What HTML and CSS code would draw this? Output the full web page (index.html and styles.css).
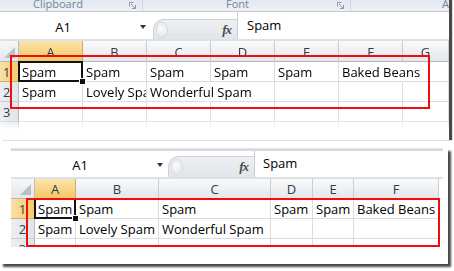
FILE: index.html
```html
<!DOCTYPE html>
<html lang="en">
<head>
  <meta charset="UTF-8">
  <title>Excel overflow text</title>
  <link rel="stylesheet" href="styles.css">
</head>
<body>

  <div class="shot shot-top">
    <div class="ribbon-groups">
      <div class="group g-clip">
        <span>Clipboard</span>
        <svg class="launcher" width="7" height="7" viewBox="0 0 7 7"><path d="M0.5 4.5v-4h4M2 2l4 4M6.5 3v3.5h-3.5" fill="none" stroke="#8d99a9" stroke-width="1"/></svg>
      </div>
      <div class="group g-font">
        <span>Font</span>
        <svg class="launcher" width="7" height="7" viewBox="0 0 7 7"><path d="M0.5 4.5v-4h4M2 2l4 4M6.5 3v3.5h-3.5" fill="none" stroke="#8d99a9" stroke-width="1"/></svg>
      </div>
      <div class="group g-align"><span>A</span></div>
    </div>

    <div class="formula-row">
      <div class="name-box"><span class="ref">A1</span><i class="dd"></i></div>
      <div class="grip"><i class="knob"></i><span class="fx">fx</span></div>
      <div class="formula-input">Spam</div>
    </div>

    <div class="sheet sheet-top">
      <div class="corner"><i></i></div>
      <div class="col-hd sel">A</div>
      <div class="col-hd">B</div>
      <div class="col-hd">C</div>
      <div class="col-hd">D</div>
      <div class="col-hd">E</div>
      <div class="col-hd">F</div>
      <div class="col-hd">G</div>

      <div class="row-hd sel">1</div>
      <div class="cell active">Spam</div>
      <div class="cell">Spam</div>
      <div class="cell">Spam</div>
      <div class="cell">Spam</div>
      <div class="cell">Spam</div>
      <div class="cell spill">Baked Beans</div>
      <div class="cell"></div>

      <div class="row-hd">2</div>
      <div class="cell">Spam</div>
      <div class="cell">Lovely Spam</div>
      <div class="cell spill">Wonderful Spam</div>
      <div class="cell"></div>
      <div class="cell"></div>
      <div class="cell"></div>
      <div class="cell"></div>

      <div class="row-hd">3</div>
      <div class="cell"></div>
      <div class="cell"></div>
      <div class="cell"></div>
      <div class="cell"></div>
      <div class="cell"></div>
      <div class="cell"></div>
      <div class="cell"></div>

      <div class="row-hd"></div>
      <div class="cell"></div>
      <div class="cell"></div>
      <div class="cell"></div>
      <div class="cell"></div>
      <div class="cell"></div>
      <div class="cell"></div>
      <div class="cell"></div>
    </div>

    <div class="mark mark-top"></div>
  </div>

  <div class="shot shot-bottom">
    <div class="top-line"></div>
    <div class="formula-row">
      <div class="name-box"><span class="ref">A1</span><i class="dd"></i></div>
      <div class="grip"><i class="knob"></i><span class="fx">fx</span></div>
      <div class="formula-input">Spam</div>
    </div>

    <div class="sheet sheet-bottom">
      <div class="corner"><i></i></div>
      <div class="col-hd sel">A</div>
      <div class="col-hd">B</div>
      <div class="col-hd">C</div>
      <div class="col-hd">D</div>
      <div class="col-hd">E</div>
      <div class="col-hd">F</div>

      <div class="row-hd sel">1</div>
      <div class="cell active">Spam</div>
      <div class="cell">Spam</div>
      <div class="cell">Spam</div>
      <div class="cell">Spam</div>
      <div class="cell">Spam</div>
      <div class="cell">Baked Beans</div>

      <div class="row-hd">2</div>
      <div class="cell">Spam</div>
      <div class="cell">Lovely Spam</div>
      <div class="cell">Wonderful Spam</div>
      <div class="cell"></div>
      <div class="cell"></div>
      <div class="cell"></div>

      <div class="row-hd">3</div>
      <div class="cell"></div>
      <div class="cell"></div>
      <div class="cell"></div>
      <div class="cell"></div>
      <div class="cell"></div>
      <div class="cell"></div>
    </div>

    <div class="mark mark-bottom"></div>
  </div>

</body>
</html>
```

FILE: styles.css
```css
body {
  margin: 0;
  width: 454px;
  height: 271px;
  overflow: hidden;
  background-color: #ffffff;
  font-family: "Open Sans", "Noto Sans", sans-serif;
  font-size: 13px;
  color: #000000;
}

.shot {
  position: relative;
  background-color: #ffffff;
  box-sizing: border-box;
}

.shot-top {
  width: 449px;
  height: 140px;
  box-shadow: 3px 0 1px rgba(40, 40, 40, 0.85);
}

.shot-bottom {
  width: 448px;
  height: 116px;
  margin-top: 8px;
  padding-left: 11px;
  padding-right: 8px;
  box-shadow: 3px 3px 2px rgba(40, 40, 40, 0.85);
}

/* ribbon group captions */
.ribbon-groups {
  display: flex;
  height: 11px;
  border-bottom: 1px solid #c3cad4;
  background: linear-gradient(#e4e9ef, #edf0f4);
  font-size: 11px;
  line-height: 11px;
  color: #7284a0;
}

.group {
  display: flex;
  align-items: flex-start;
  box-sizing: border-box;
  border-right: 1px solid #cfd6df;
}

.group span {
  margin-top: -2px;
}

.g-clip {
  width: 144px;
  padding-left: 33px;
}

.g-font {
  width: 209px;
  padding-left: 83px;
}

.g-align {
  flex: 1;
  padding-left: 91px;
  border-right: none;
}

.launcher {
  margin-left: auto;
  margin-right: 6px;
  margin-top: 2px;
}

/* name box + formula bar */
.formula-row {
  display: flex;
  height: 27px;
  border-bottom: 2px solid #dde1e6;
  background-color: #ffffff;
}

.shot-bottom .formula-row {
  height: 26px;
  margin-right: -3px;
}

.top-line {
  height: 3px;
  margin-right: -3px;
  background: linear-gradient(#e2e5e9, #cfd4da);
}

.name-box {
  display: flex;
  align-items: center;
  width: 150px;
  padding-top: 3px;
  box-sizing: border-box;
}

.shot-bottom .name-box {
  width: 154px;
  padding-top: 2px;
}

.ref {
  width: 126px;
  text-align: center;
  font-size: 13px;
}

.shot-bottom .ref {
  width: 138px;
}

.dd {
  width: 0;
  height: 0;
  margin-left: 14px;
  border-left: 3.5px solid transparent;
  border-right: 3.5px solid transparent;
  border-top: 4px solid #333333;
}

.shot-bottom .dd {
  margin-left: 8px;
}

.grip {
  display: flex;
  align-items: center;
  align-self: flex-end;
  width: 84px;
  height: 20px;
  margin-left: 3px;
  box-sizing: border-box;
  border: 1px solid #cdd2d8;
  border-right: none;
  border-bottom: none;
  border-radius: 11px 0 0 0;
  background: linear-gradient(#eef0f2, #e2e5e9);
}

.shot-bottom .grip {
  height: 21px;
  width: 86px;
}

.knob {
  width: 10px;
  height: 14px;
  margin-left: 3px;
  border-radius: 50%;
  background: radial-gradient(circle at 40% 40%, #fbfbfc, #dfe2e6);
  box-shadow: 0 0 0 1px #d5d9de;
}

.fx {
  margin-left: auto;
  margin-right: 6px;
  font-family: "Liberation Serif", "DejaVu Serif", serif;
  font-style: italic;
  font-weight: bold;
  font-size: 13px;
  letter-spacing: -1px;
  color: #4a4a4a;
}

.formula-input {
  flex: 1;
  padding-left: 9px;
  padding-top: 4px;
  border-left: 1px solid #c9ced5;
  font-size: 13px;
  line-height: 19px;
}

.shot-bottom .formula-input {
  padding-left: 8px;
  padding-top: 3px;
}

/* sheet grid */
.sheet {
  display: grid;
  overflow: hidden;
}

.sheet-top {
  grid-template-columns: 19px repeat(6, 64px) 46px;
  grid-template-rows: 21px repeat(4, 20px);
  height: 89px;
  -webkit-mask-image: linear-gradient(#000 78px, transparent 89px);
  mask-image: linear-gradient(#000 78px, transparent 89px);
}

.sheet-bottom {
  grid-template-columns: 24px 41px 83px 112px 42px 41px 85px;
  grid-template-rows: repeat(4, 20px);
  height: 68px;
}

.corner,
.col-hd,
.row-hd,
.cell {
  box-sizing: border-box;
}

.corner {
  display: flex;
  align-items: flex-end;
  justify-content: flex-end;
  padding: 0 3px 3px 0;
  background: linear-gradient(#f6f7f9, #e3e6ea);
  border-right: 1px solid #b7bec8;
  border-bottom: 1px solid #b1b8c2;
}

.corner i {
  width: 0;
  height: 0;
  border-left: 11px solid transparent;
  border-bottom: 11px solid #b9bfc7;
}

.col-hd {
  display: flex;
  align-items: center;
  justify-content: center;
  padding-top: 1px;
  background: linear-gradient(#f9fafb, #e4e7eb);
  border-right: 1px solid #c8cdd4;
  border-bottom: 1px solid #b1b8c2;
  color: #2f3b4a;
}

.col-hd.sel {
  background: linear-gradient(#fbe3ad, #f5c962);
  border-right-color: #d7ac56;
  border-bottom-color: #e0a53e;
}

.row-hd {
  display: flex;
  align-items: center;
  justify-content: center;
  padding-top: 1px;
  background: linear-gradient(to right, #eceef1, #e1e4e8);
  border-right: 1px solid #b1b8c2;
  border-bottom: 1px solid #c8cdd4;
  color: #2f3b4a;
}

.sheet-top .row-hd {
  justify-content: flex-start;
  padding-left: 3px;
}

.row-hd.sel {
  background: linear-gradient(to right, #fbe0a6, #f6cb6a);
  border-bottom-color: #d7ac56;
}

.cell {
  padding: 1px 0 0 3px;
  line-height: 19px;
  white-space: nowrap;
  overflow: hidden;
  border-right: 1px solid #dadcdf;
  border-bottom: 1px solid #dadcdf;
}

.cell.spill {
  overflow: visible;
  border-right-color: #ffffff;
}

.cell.active {
  position: relative;
  overflow: visible;
  z-index: 2;
}

.cell.active::before {
  content: "";
  position: absolute;
  top: -1px;
  left: -1px;
  right: -1px;
  bottom: -1px;
  border: 2px solid #111111;
}

.cell.active::after {
  content: "";
  position: absolute;
  right: -4px;
  bottom: -4px;
  width: 5px;
  height: 5px;
  background-color: #111111;
  border: 1px solid #ffffff;
}

/* red annotation boxes */
.mark {
  position: absolute;
  border: 2px solid #f20d0d;
  box-sizing: border-box;
  z-index: 3;
}

.mark-top {
  left: 10px;
  top: 55px;
  width: 420px;
  height: 54px;
}

.mark-bottom {
  left: 26px;
  top: 50px;
  width: 414px;
  height: 49px;
}
```
